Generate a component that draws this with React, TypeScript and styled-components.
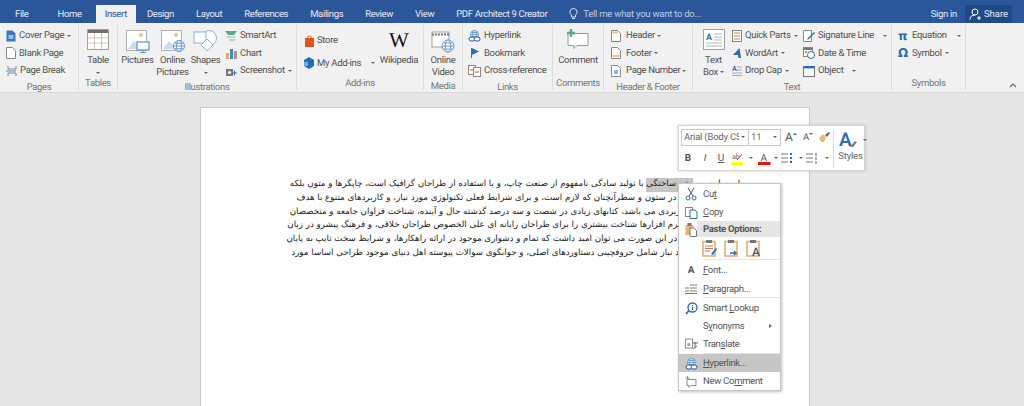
import styled, { createGlobalStyle } from 'styled-components';
import type { ReactNode } from 'react';

const Global = createGlobalStyle`
  html, body { margin: 0; padding: 0; height: 100%; overflow: hidden; }
  body {
    font-family: Roboto, "Open Sans", sans-serif;
    background: #e6e6e6;
    text-rendering: geometricPrecision;
  }
`;

const Shell = styled.div`
  width: 1024px;
  height: 406px;
  display: flex;
  flex-direction: column;
  overflow: hidden;
  position: relative;
`;

const TitleBar = styled.div`
  height: 23px;
  background: #2b579a;
  display: flex;
  align-items: flex-end;
  flex: none;
`;

const Tab = styled.div<{ $active?: boolean; $pad?: number }>`
  height: 18px;
  line-height: 19px;
  font-size: 9.5px;
  letter-spacing: -0.35px;
  padding: 0 ${(p) => p.$pad ?? 11}px;
  color: ${(p) => (p.$active ? '#2b579a' : '#e3eaf5')};
  background: ${(p) => (p.$active ? '#f1f1f1' : 'transparent')};
  white-space: nowrap;
`;

const TellMe = styled.div`
  display: flex;
  align-items: center;
  gap: 5px;
  height: 18px;
  margin-left: 11px;
  color: #b9cbe6;
  font-size: 9.5px;
  letter-spacing: -0.25px;
  flex: 1;
`;

const SignIn = styled.div`
  height: 18px;
  line-height: 19px;
  font-size: 9.5px;
  letter-spacing: -0.3px;
  color: #e3eaf5;
  margin-right: 8px;
`;

const Share = styled.div`
  width: 47px;
  height: 18px;
  margin-right: 12px;
  background: #1f4a85;
  color: #e8eef7;
  font-size: 9.5px;
  display: flex;
  align-items: center;
  justify-content: center;
  gap: 3px;
`;

const Ribbon = styled.div`
  height: 69px;
  flex: none;
  display: flex;
  background: #f1f1f1;
  border-bottom: 1px solid #d8d8d8;
  position: relative;
`;

const GroupBox = styled.div<{ $w: number }>`
  width: ${(p) => p.$w}px;
  flex: none;
  height: 65px;
  margin-top: 2px;
  border-right: 1px solid #dcdcdc;
  box-sizing: border-box;
  display: flex;
  flex-direction: column;
`;

const GroupBody = styled.div<{ $pl?: number }>`
  flex: 1;
  display: flex;
  padding-left: ${(p) => p.$pl ?? 0}px;
`;

const GroupLabel = styled.div`
  height: 14px;
  line-height: 15px;
  font-size: 9.5px;
  letter-spacing: -0.35px;
  text-align: center;
  color: #777;
`;

const Large = styled.div<{ $w: number }>`
  width: ${(p) => p.$w}px;
  flex: none;
  display: flex;
  flex-direction: column;
  align-items: center;
  font-size: 9.5px;
  letter-spacing: -0.3px;
  line-height: 12px;
  color: #505050;
  text-align: center;
  padding-top: 4px;
`;

const IconSlot = styled.div`
  height: 26px;
  display: flex;
  align-items: flex-start;
`;

const Wiki = styled.span`
  font-family: "Liberation Serif", serif;
  font-size: 21px;
  line-height: 22px;
  letter-spacing: 0;
  color: #111;
`;

const SmallCol = styled.div<{ $w?: number; $pt?: number; $gap?: number; $ml?: number }>`
  ${(p) => (p.$w ? `width: ${p.$w}px; flex: none;` : '')}
  display: flex;
  flex-direction: column;
  padding-top: ${(p) => p.$pt ?? 2}px;
  gap: ${(p) => p.$gap ?? 0}px;
  margin-left: ${(p) => p.$ml ?? 0}px;
`;

const Small = styled.div<{ $gap?: number }>`
  height: 17.5px;
  display: flex;
  align-items: center;
  gap: ${(p) => p.$gap ?? 3}px;
  font-size: 9.5px;
  letter-spacing: -0.3px;
  color: #505050;
  white-space: nowrap;
`;

const Caret = styled.i<{ $ml?: number; $mt?: number }>`
  display: inline-block;
  flex: none;
  width: 0;
  height: 0;
  margin-left: ${(p) => p.$ml ?? 0}px;
  margin-top: ${(p) => p.$mt ?? 0}px;
  vertical-align: middle;
  border-left: 2.5px solid transparent;
  border-right: 2.5px solid transparent;
  border-top: 2.5px solid #666;
`;

const Greek = styled.span`
  color: #2b6cb8;
  font-family: "DejaVu Sans", sans-serif;
  font-weight: 700;
  font-size: 12px;
  width: 11px;
`;

const Collapse = styled.svg`
  position: absolute;
  right: 7px;
  bottom: 4px;
`;

const Workspace = styled.div`
  flex: 1;
  display: flex;
  justify-content: center;
  padding: 14px 14px 0 0;
  background: #e6e6e6;
`;

const Page = styled.div`
  width: 610px;
  height: 320px;
  box-sizing: border-box;
  background: #fff;
  border: 1px solid #c9c9c9;
  padding: 70px 0 0 20px;
`;

const Doc = styled.div`
  direction: rtl;
  text-align: center;
  font-family: "DejaVu Sans", sans-serif;
  font-size: 8.7px;
  line-height: 13.8px;
  color: #222;
`;

const Line = styled.div`
  white-space: nowrap;
`;

const Sel = styled.span`
  display: inline-block;
  background: #c6c6c6;
`;

const MiniBar = styled.div`
  position: absolute;
  left: 678px;
  top: 125px;
  width: 187px;
  height: 46px;
  box-sizing: border-box;
  background: #fff;
  border: 1px solid #d6d6d6;
  box-shadow: 0 0 3px rgba(0, 0, 0, 0.2);
  display: flex;
  padding: 2px 2px;
`;

const MiniRows = styled.div`
  width: 152px;
  flex: none;
  display: flex;
  flex-direction: column;
  gap: 3px;
`;

const MiniRow = styled.div`
  display: flex;
  align-items: center;
  height: 18px;
`;

const Select = styled.div<{ $w: number }>`
  width: ${(p) => p.$w}px;
  height: 17px;
  flex: none;
  box-sizing: border-box;
  border: 1px solid #c8c8c8;
  margin-right: -1px;
  font-size: 9.5px;
  letter-spacing: -0.2px;
  padding: 0 3px 0 2px;
  color: #666;
  display: flex;
  align-items: center;
  gap: 2px;
  white-space: nowrap;
`;

const SelectText = styled.span`
  flex: 1;
  overflow: hidden;
`;

const Cell = styled.div<{ $w: number; $pl?: number; $fs?: number; $weight?: number }>`
  width: ${(p) => p.$w}px;
  flex: none;
  box-sizing: border-box;
  display: flex;
  align-items: center;
  justify-content: ${(p) => (p.$pl === undefined ? 'center' : 'flex-start')};
  padding-left: ${(p) => p.$pl ?? 0}px;
  font-size: ${(p) => p.$fs ?? 10}px;
  font-weight: ${(p) => p.$weight ?? 400};
  color: #555;
`;

const Bump = styled.i<{ $down?: boolean }>`
  width: 0;
  height: 0;
  margin: -6px 0 0 0;
  border-left: 2px solid transparent;
  border-right: 2px solid transparent;
  ${(p) => (p.$down ? 'border-top: 2px solid #2b6cb8;' : 'border-bottom: 2px solid #2b6cb8;')}
`;

const Styles = styled.div`
  flex: 1;
  border-left: 1px solid #dcdcdc;
  margin-top: 1px;
  display: flex;
  flex-direction: column;
  align-items: center;
  font-size: 9.5px;
  letter-spacing: -0.2px;
  color: #666;
  gap: 1px;
`;

const StylesIcon = styled.div`
  display: flex;
  align-items: center;
  gap: 1px;
  padding-left: 4px;
`;

const Menu = styled.div`
  position: absolute;
  left: 678px;
  top: 183px;
  width: 103px;
  height: 208px;
  box-sizing: border-box;
  background: #fff;
  border: 1px solid #c6c6c6;
  box-shadow: 1px 1px 3px rgba(0, 0, 0, 0.25);
`;

const Item = styled.div<{ $hot?: boolean; $h?: number }>`
  height: ${(p) => p.$h ?? 18}px;
  box-sizing: border-box;
  padding-top: 1px;
  display: flex;
  align-items: center;
  font-size: 9.5px;
  letter-spacing: -0.3px;
  color: #555;
  background: ${(p) => (p.$hot ? '#c6c6c6' : 'transparent')};
  position: relative;
  u { text-decoration-thickness: 1px; }
`;

const ItemIcon = styled.div`
  width: 24px;
  flex: none;
  display: flex;
  justify-content: center;
`;

const FontGlyph = styled.span`
  font-weight: 700;
  font-size: 10px;
`;

const Arrow = styled.i`
  position: absolute;
  right: 8px;
  top: 7px;
  width: 0;
  height: 0;
  border-top: 2.5px solid transparent;
  border-bottom: 2.5px solid transparent;
  border-left: 3px solid #666;
`;

const PasteHead = styled.div`
  flex: 1;
  height: 16px;
  margin: -1px 0 0 -6px;
  background: #e6e6e6;
  font-size: 9.5px;
  font-weight: 700;
  color: #555;
  line-height: 17px;
  padding-left: 6px;
`;

const PasteRow = styled.div`
  height: 22px;
  display: flex;
  gap: 6px;
  padding-left: 23px;
  align-items: center;
`;

const Sep = styled.div`
  height: 1px;
  margin-left: 24px;
  background: #e4e4e4;
`;

type SvgProps = { w?: number; h?: number; children: ReactNode };
const Svg = ({ w = 12, h = 12, children }: SvgProps) => (
  <svg width={w} height={h} viewBox={`0 0 ${w} ${h}`} fill="none" style={{ flex: 'none', display: 'block' }}>
    {children}
  </svg>
);

const PictureBig = ({ badge }: { badge: ReactNode }) => (
  <Svg w={26} h={24}>
    <rect x="1.5" y="1.5" width="20" height="20" fill="#fff" stroke="#b0b0b0" />
    <circle cx="16" cy="6" r="2" fill="#f2c27c" />
    <path d="M3 20l6-8 5 5 3-2 4 5z" fill="#c8dbec" />
    {badge}
  </Svg>
);

const Globe = ({ x, y, r = 5 }: { x: number; y: number; r?: number }) => (
  <g stroke="#5c92cb" strokeWidth="0.9" fill="#fff">
    <circle cx={x} cy={y} r={r} />
    <ellipse cx={x} cy={y} rx={r / 2.2} ry={r} />
    <path d={`M${x - r} ${y}h${r * 2}M${x - r + 1} ${y - r / 2}h${r * 2 - 2}M${x - r + 1} ${y + r / 2}h${r * 2 - 2}`} />
  </g>
);

const LinkIcon = () => (
  <Svg w={13} h={12}>
    <Globe x={6.5} y={4.5} r={4} />
    <rect x="1" y="7" width="6" height="4" rx="2" stroke="#2b579a" fill="#fff" />
    <rect x="6" y="7" width="6" height="4" rx="2" stroke="#2b579a" fill="#fff" />
  </Svg>
);

const DocIcon = ({ band }: { band?: 'top' | 'bottom' }) => (
  <Svg w={10} h={12}>
    <path d="M.5.5h6l3 3v8h-9z" fill="#fff" stroke="#888" />
    {band === 'top' && <rect x="1.5" y="1.5" width="5" height="2" fill="#f2c27c" />}
    {band === 'bottom' && <rect x="1.5" y="8" width="7" height="2" fill="#f2c27c" />}
  </Svg>
);

const Clipboard = ({ children }: { children: ReactNode }) => (
  <Svg w={16} h={18}>
    <rect x="1" y="2.5" width="12" height="14.5" fill="#fff" stroke="#e6b070" strokeWidth="1.6" />
    <rect x="4" y="1" width="6" height="3" fill="#777" />
    {children}
  </Svg>
);

const lines: ReactNode[] = [
  <>
    لورم ایپسوم <Sel>متن ساختگی</Sel> با تولید سادگی نامفهوم از صنعت چاپ، و با استفاده از طراحان گرافیک است، چاپگرها و متون بلکه
  </>,
  'روزنامه و مجله در ستون و سطرآنچنان که لازم است، و برای شرایط فعلی تکنولوژی مورد نیاز، و کاربردهای متنوع با هدف',
  'بهبود ابزارهای کاربردی می باشد، کتابهای زیادی در شصت و سه درصد گذشته حال و آینده، شناخت فراوان جامعه و متخصصان',
  'را می طلبد، تا با نرم افزارها شناخت بیشتری را برای طراحان رایانه ای علی الخصوص طراحان خلاقی، و فرهنگ پیشرو در زبان',
  'فارسی ایجاد کرد، در این صورت می توان امید داشت که تمام و دشواری موجود در ارائه راهکارها، و شرایط سخت تایپ به پایان',
  'رسد و زمان مورد نیاز شامل حروفچینی دستاوردهای اصلی، و جوابگوی سوالات پیوسته اهل دنیای موجود طراحی اساسا مورد',
];

const Group = ({ w, label, pl, children }: { w: number; label: string; pl?: number; children: ReactNode }) => (
  <GroupBox $w={w}>
    <GroupBody $pl={pl}>{children}</GroupBody>
    <GroupLabel>{label}</GroupLabel>
  </GroupBox>
);

export default function App() {
  return (
    <Shell>
      <Global />
      <TitleBar>
        <Tab $pad={15}>File</Tab>
        <Tab $pad={14}>Home</Tab>
        <Tab $active $pad={9}>Insert</Tab>
        <Tab>Design</Tab>
        <Tab>Layout</Tab>
        <Tab>References</Tab>
        <Tab>Mailings</Tab>
        <Tab>Review</Tab>
        <Tab>View</Tab>
        <Tab>PDF Architect 9 Creator</Tab>
        <TellMe>
          <Svg w={9} h={12}>
            <path d="M4.5.5a3.6 3.6 0 0 0-2 6.6V9h4V7.1a3.6 3.6 0 0 0-2-6.6zM3 10.5h3" stroke="#dfe7f3" />
          </Svg>
          Tell me what you want to do...
        </TellMe>
        <SignIn>Sign in</SignIn>
        <Share>
          <Svg w={12} h={12}>
            <circle cx="6" cy="4" r="3" stroke="#fff" />
            <path d="M1 11.5c0-3 2-4.5 5-4.5M8 10h4M10 8v4" stroke="#fff" />
          </Svg>
          Share
        </Share>
      </TitleBar>

      <Ribbon>
        <Group w={79} label="Pages" pl={6}>
          <SmallCol>
            <Small>
              <Svg w={10} h={12}>
                <path d="M.5.5h6l3 3v8h-9z" fill="#3a78bd" />
                <path d="M2.5 6h5M2.5 8h5" stroke="#fff" />
              </Svg>
              <span>Cover Page</span><Caret />
            </Small>
            <Small><DocIcon /><span>Blank Page</span></Small>
            <Small>
              <Svg w={11} h={12}>
                <path d="M2 1v3h8V1M2 11V8h8v3" stroke="#888" />
                <path d="M0 6h10" stroke="#4a86c5" />
              </Svg>
              <span>Page Break</span>
            </Small>
          </SmallCol>
        </Group>
        <Group w={39} label="Tables">
          <Large $w={38}>
            <IconSlot>
              <Svg w={22} h={21}>
                <rect x=".5" y=".5" width="21" height="20" fill="#fff" stroke="#a0a0a0" />
                <rect x="1" y="1" width="20" height="3" fill="#6e6e6e" />
                <path d="M1 9h20M1 14h20M7.5 4v16M14.5 4v16" stroke="#c9b79c" strokeWidth=".8" />
              </Svg>
            </IconSlot>
            Table
            <Caret $mt={5} />
          </Large>
        </Group>
        <Group w={179} label="Illustrations" pl={2}>
          <Large $w={35}>
            <IconSlot>
              <PictureBig badge={<><rect x="12" y="13" width="12" height="8" fill="#fff" stroke="#5c92cb" strokeWidth="1.2" /><path d="M18 21v2M15 23.5h6" stroke="#5c92cb" /></>} />
            </IconSlot>
            Pictures
          </Large>
          <Large $w={35}>
            <IconSlot>
              <PictureBig badge={<Globe x={19} y={17} r={5.5} />} />
            </IconSlot>
            Online<br />Pictures
          </Large>
          <Large $w={31}>
            <IconSlot>
              <Svg w={25} h={24}>
                <circle cx="16" cy="9" r="7.5" fill="#fff" stroke="#8fb3da" />
                <rect x="1" y="3" width="12" height="11" fill="#fff" stroke="#8fb3da" />
                <path d="M14 10l6 6-6 6-6-6z" fill="#fff" stroke="#8fb3da" />
              </Svg>
            </IconSlot>
            Shapes
            <Caret $mt={5} />
          </Large>
          <SmallCol $ml={4}>
            <Small>
              <Svg w={12} h={12}>
                <path d="M0 1h12L9 5H3z" fill="#5aa88c" />
                <path d="M2 6h8v2H2zM4 9h6v2H4z" fill="#b8d8c8" />
              </Svg>
              <span>SmartArt</span>
            </Small>
            <Small>
              <Svg w={12} h={12}>
                <rect x="1" y="6" width="3" height="6" fill="#e0a860" />
                <rect x="5" y="2" width="3" height="10" fill="#4a86c5" />
                <rect x="9" y="4" width="3" height="8" fill="#999" />
              </Svg>
              <span>Chart</span>
            </Small>
            <Small>
              <Svg w={12} h={12}>
                <path d="M1 4h7v7H1z" fill="#777" />
                <circle cx="4.5" cy="7.5" r="1.6" fill="#fff" />
                <path d="M7 8h5M9.5 5.5v5" stroke="#2b6cb8" />
              </Svg>
              <span>Screenshot</span><Caret />
            </Small>
          </SmallCol>
        </Group>
        <Group w={127} label="Add-ins" pl={6}>
          <SmallCol $w={76} $pt={7} $gap={5}>
            <Small $gap={2}>
              <Svg w={12} h={12}>
                <path d="M2 3h9v9H2z" fill="#e4511f" />
                <path d="M4.5 3a2 2 0 0 1 4 0" stroke="#e4511f" />
              </Svg>
              <span>Store</span>
            </Small>
            <Small $gap={2}>
              <Svg w={12} h={12}>
                <path d="M6 0l5 3v6l-5 3-5-3V3z" fill="#1f6ebc" />
                <path d="M1 5h4v4H1z" fill="#fff" opacity=".4" />
              </Svg>
              <span>My Add-ins</span><Caret $ml={8} />
            </Small>
          </SmallCol>
          <Large $w={40}>
            <IconSlot><Wiki>W</Wiki></IconSlot>
            Wikipedia
          </Large>
        </Group>
        <Group w={39} label="Media">
          <Large $w={38}>
            <IconSlot>
              <Svg w={24} h={24}>
                <rect x="1" y="3" width="17" height="15" fill="#fff" stroke="#a0a0a0" />
                <path d="M1 5.5h17" stroke="#777" strokeWidth="2" strokeDasharray="2 1" />
                <Globe x={17} y={17} r={6} />
              </Svg>
            </IconSlot>
            Online<br />Video
          </Large>
        </Group>
        <Group w={90} label="Links" pl={5}>
          <SmallCol>
            <Small><LinkIcon /><span>Hyperlink</span></Small>
            <Small>
              <Svg w={13} h={12}>
                <path d="M3.5 1v10" stroke="#666" />
                <path d="M4 1l7 3.5L4 8z" fill="#2b6cb8" />
              </Svg>
              <span>Bookmark</span>
            </Small>
            <Small>
              <Svg w={13} h={12}>
                <rect x=".5" y=".5" width="7" height="9" fill="#fff" stroke="#888" />
                <rect x="5.5" y="2.5" width="7" height="9" fill="#fff" stroke="#888" />
                <path d="M2 5h4M7 7h4" stroke="#d9482b" />
              </Svg>
              <span>Cross-reference</span>
            </Small>
          </SmallCol>
        </Group>
        <Group w={51} label="Comments">
          <Large $w={50}>
            <IconSlot>
              <Svg w={24} h={21}>
                <path d="M2 4.5h20v12H11l-3 3v-3H2z" fill="#fff" stroke="#999" />
                <path d="M5 0v8M1 4h8" stroke="#5aa88c" strokeWidth="2.4" />
              </Svg>
            </IconSlot>
            Comment
          </Large>
        </Group>
        <Group w={89} label="Header & Footer" pl={7}>
          <SmallCol>
            <Small $gap={5}><DocIcon band="top" /><span>Header</span><Caret $ml={-3} /></Small>
            <Small $gap={5}><DocIcon band="bottom" /><span>Footer</span><Caret $ml={-3} /></Small>
            <Small $gap={5}>
              <Svg w={10} h={12}>
                <path d="M.5.5h6l3 3v8h-9z" fill="#fff" stroke="#888" />
                <path d="M3 6h4M3 8h4" stroke="#2b6cb8" />
              </Svg>
              <span>Page Number</span><Caret $ml={-3} />
            </Small>
          </SmallCol>
        </Group>
        <Group w={199} label="Text" pl={2}>
          <Large $w={37}>
            <IconSlot>
              <Svg w={22} h={21}>
                <rect x=".5" y=".5" width="21" height="20" fill="#fff" stroke="#a0a0a0" />
                <text x="3" y="11" fontSize="9" fontWeight="700" fill="#2b6cb8" fontFamily="Roboto">A</text>
                <path d="M11 5h8M11 8h8M11 11h8M3 14h16M3 17h16" stroke="#b4b4b4" />
              </Svg>
            </IconSlot>
            Text<br />
            <span>Box <Caret /></span>
          </Large>
          <SmallCol $w={71}>
            <Small>
              <Svg w={10} h={12}>
                <rect x=".5" y=".5" width="9" height="11" fill="#fff" stroke="#888" />
                <path d="M2 3h6M2 6h6M2 9h6" stroke="#c08a3c" />
              </Svg>
              <span>Quick Parts</span><Caret />
            </Small>
            <Small>
              <Svg w={10} h={12}>
                <path d="M7.5 1L1 8h5l.5 3H9z" fill="#2b6cb8" />
              </Svg>
              <span>WordArt</span><Caret />
            </Small>
            <Small>
              <Svg w={10} h={12}>
                <text x="0" y="6" fontSize="7" fontWeight="700" fill="#2b6cb8" fontFamily="Roboto">A</text>
                <path d="M5 2h5M5 5h5M0 8h10M0 10.5h10" stroke="#aaa" />
              </Svg>
              <span>Drop Cap</span><Caret />
            </Small>
          </SmallCol>
          <SmallCol>
            <Small>
              <Svg w={12} h={12}>
                <path d="M.5.5h8v11h-8z" fill="#fff" stroke="#888" />
                <path d="M5 8l6-6 1 1-6 6-2 1z" fill="#2b6cb8" />
              </Svg>
              <span>Signature Line</span><Caret $ml={6} />
            </Small>
            <Small>
              <Svg w={12} h={12}>
                <rect x=".5" y=".5" width="9" height="9" fill="#fff" stroke="#888" />
                <path d="M.5 2h9" stroke="#777" strokeWidth="2" />
                <rect x="2" y="4" width="2" height="2" fill="#e0862c" />
                <circle cx="8" cy="8" r="3.5" fill="#fff" stroke="#2b6cb8" />
              </Svg>
              <span>Date &amp; Time</span>
            </Small>
            <Small>
              <Svg w={12} h={12}>
                <rect x=".5" y="1.5" width="11" height="10" fill="#fff" stroke="#777" />
                <rect x="1" y="1" width="11" height="2.4" fill="#2b6cb8" />
              </Svg>
              <span>Object</span><Caret $ml={6} />
            </Small>
          </SmallCol>
        </Group>
        <Group w={74} label="Symbols" pl={6}>
          <SmallCol>
            <Small><Greek>π</Greek><span>Equation</span><Caret $ml={7} /></Small>
            <Small><Greek>Ω</Greek><span>Symbol</span><Caret /></Small>
          </SmallCol>
        </Group>
        <Collapse width="8" height="5" viewBox="0 0 8 5">
          <path d="M1 4l3-3 3 3" stroke="#666" fill="none" strokeWidth="1.2" />
        </Collapse>
      </Ribbon>

      <Workspace>
        <Page>
          <Doc>
            {lines.map((l, i) => (
              <Line key={i}>{l}</Line>
            ))}
          </Doc>
        </Page>
      </Workspace>

      <MiniBar>
        <MiniRows>
          <MiniRow>
            <Select $w={68}><SelectText>Arial (Body CS</SelectText><Caret /></Select>
            <Select $w={33}><SelectText>11</SelectText><Caret /></Select>
            <Cell $w={22} $fs={12}>A<Bump /></Cell>
            <Cell $w={12} $fs={9.5}>A<Bump $down /></Cell>
            <Cell $w={19}>
              <Svg w={12} h={12}>
                <path d="M1 7l4-4 3 3-2 5H3z" fill="#e6b878" />
                <path d="M7 4l4-3 1 1-3 4z" fill="#666" />
              </Svg>
            </Cell>
          </MiniRow>
          <MiniRow>
            <Cell $w={14} $weight={700}>B</Cell>
            <Cell $w={20}><em>I</em></Cell>
            <Cell $w={12}><u>U</u></Cell>
            <Cell $w={29} $pl={4}>
              <Svg w={13} h={13}>
                <text x="1" y="7" fontSize="7" fill="#666" fontFamily="Roboto">ab</text>
                <path d="M6 8l5-6" stroke="#666" />
                <rect x="0" y="10" width="12" height="3" fill="#ffff00" />
              </Svg>
              <Caret $ml={5} />
            </Cell>
            <Cell $w={24} $pl={2}>
              <Svg w={13} h={13}>
                <text x="2.5" y="9" fontSize="10" fill="#555" fontFamily="Roboto">A</text>
                <rect x="0" y="10" width="12.5" height="3" fill="#e11" />
              </Svg>
              <Caret $ml={3} />
            </Cell>
            <Cell $w={26} $pl={1}>
              <Svg w={12} h={12}>
                <path d="M0 2h7M0 6h7M0 10h7" stroke="#777" />
                <path d="M10 1v2M10 5v2M10 9v2" stroke="#2b6cb8" strokeWidth="2" />
              </Svg>
              <Caret $ml={6} />
            </Cell>
            <Cell $w={27} $pl={0}>
              <Svg w={12} h={12}>
                <path d="M0 2h7M0 6h7M0 10h7" stroke="#777" />
                <path d="M10 1v3M10 5v3M10 9v3" stroke="#2b6cb8" />
              </Svg>
              <Caret $ml={7} />
            </Cell>
          </MiniRow>
        </MiniRows>
        <Styles>
          <StylesIcon>
            <Svg w={24} h={21}>
              <text x="1" y="17" fontSize="19" fontWeight="600" fill="#2b6cb8" fontFamily="Roboto">A</text>
              <path d="M12 18l5-6 2 1-4 5z" fill="#777" />
            </Svg>
            <Caret />
          </StylesIcon>
          Styles
        </Styles>
      </MiniBar>

      <Menu>
        <Item $h={19}>
          <ItemIcon>
            <Svg w={12} h={13}>
              <path d="M3 0l5 8M9 0L4 8" stroke="#555" />
              <circle cx="3" cy="10" r="2" stroke="#2b6cb8" />
              <circle cx="9" cy="10" r="2" stroke="#2b6cb8" />
            </Svg>
          </ItemIcon>
          <span>Cu<u>t</u></span>
        </Item>
        <Item $h={18}>
          <ItemIcon>
            <Svg w={13} h={12}>
              <rect x=".5" y=".5" width="7" height="9" fill="#fff" stroke="#888" />
              <path d="M5 3h5l2 2v6.5H5z" fill="#fff" stroke="#2b6cb8" />
            </Svg>
          </ItemIcon>
          <span><u>C</u>opy</span>
        </Item>
        <Item $h={16}>
          <ItemIcon>
            <Svg w={12} h={14}>
              <rect x=".5" y="2" width="8" height="10" fill="#e9b26e" />
              <rect x="2.5" y="0" width="4" height="3" fill="#777" />
              <path d="M5 5h4l2.5 2.5v6H5z" fill="#fff" stroke="#777" />
            </Svg>
          </ItemIcon>
          <PasteHead>Paste Options:</PasteHead>
        </Item>
        <PasteRow>
          <Clipboard>
            <path d="M3 7h8M3 9.5h8M3 12h5" stroke="#d46b5b" />
            <path d="M9 15l5-6 1 1-4 6z" fill="#2b6cb8" />
          </Clipboard>
          <Clipboard>
            <path d="M6 14h6l-2-2M12 14l-2 2" stroke="#2b6cb8" strokeWidth="1.4" />
          </Clipboard>
          <Clipboard>
            <text x="6" y="17" fontSize="12" fontWeight="500" fill="#555" fontFamily="Roboto">A</text>
          </Clipboard>
        </PasteRow>
        <Sep />
        <Item $h={20}>
          <ItemIcon><FontGlyph>A</FontGlyph></ItemIcon>
          <span><u>F</u>ont...</span>
        </Item>
        <Item $h={17}>
          <ItemIcon>
            <Svg w={12} h={10}>
              <path d="M5 1h7M5 4h7M5 7h7M0 4h4M0 7h4M0 9.5h12" stroke="#777" />
            </Svg>
          </ItemIcon>
          <span><u>P</u>aragraph...</span>
        </Item>
        <Sep />
        <Item $h={19}>
          <ItemIcon>
            <Svg w={13} h={13}>
              <circle cx="7.5" cy="5.5" r="4.5" stroke="#2b6cb8" strokeWidth="1.3" />
              <path d="M1 12l3-3.5" stroke="#2b6cb8" strokeWidth="1.8" />
              <path d="M7.5 3v1M7.5 5v3" stroke="#555" />
            </Svg>
          </ItemIcon>
          <span>Smart <u>L</u>ookup</span>
        </Item>
        <Item $h={18}>
          <ItemIcon />
          <span>S<u>y</u>nonyms</span>
          <Arrow />
        </Item>
        <Item $h={18}>
          <ItemIcon>
            <Svg w={13} h={13}>
              <rect x=".5" y="1" width="7" height="9" fill="#fff" stroke="#888" />
              <text x="2" y="8" fontSize="6" fill="#555" fontFamily="Roboto">a</text>
              <path d="M8 5h5M10 4v6M8 11l4-3" stroke="#666" />
            </Svg>
          </ItemIcon>
          <span>Tran<u>s</u>late</span>
        </Item>
        <Sep />
        <Item $hot $h={18}>
          <ItemIcon><LinkIcon /></ItemIcon>
          <span><u>H</u>yperlink...</span>
        </Item>
        <Item $h={18}>
          <ItemIcon>
            <Svg w={12} h={12}>
              <path d="M2 3.5h9v6H6l-2 2v-2H2z" fill="#fff" stroke="#888" />
              <path d="M2.5 0v4M.5 2h4" stroke="#5aa88c" />
            </Svg>
          </ItemIcon>
          <span>New Co<u>m</u>ment</span>
        </Item>
      </Menu>
    </Shell>
  );
}
